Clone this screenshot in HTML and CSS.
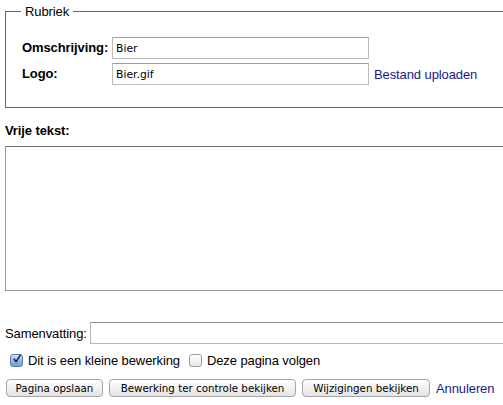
FILE: index.html
```html
<!DOCTYPE html>
<html lang="nl">
<head>
<meta charset="utf-8">
<title>Rubriek bewerken</title>
<link rel="stylesheet" href="styles.css">
</head>
<body>
<form class="page">
  <div class="box">
    <div class="box-title">Rubriek</div>
    <div class="fields">
      <label class="field-label" for="oms">Omschrijving:</label>
      <input class="text-input" id="oms" type="text" value="Bier">
      <span></span>
      <label class="field-label" for="logo">Logo:</label>
      <input class="text-input" id="logo" type="text" value="Bier.gif">
      <a class="link" href="#">Bestand uploaden</a>
    </div>
  </div>

  <div class="section-label">Vrije tekst:</div>
  <textarea class="editor"></textarea>

  <div class="summary-row">
    <label class="summary-label" for="sum">Samenvatting:</label>
    <input class="summary-input" id="sum" type="text">
  </div>

  <div class="check-row">
    <span class="check checked"><svg viewBox="0 0 12 12" width="12" height="12"><path d="M2.6 6.2 L5 9.2 L9.8 1.6" fill="none" stroke="#1b2740" stroke-width="1.9" stroke-linecap="round" stroke-linejoin="round"/></svg></span>
    <span class="check-text">Dit is een kleine bewerking</span>
    <span class="check"></span>
    <span class="check-text">Deze pagina volgen</span>
  </div>

  <div class="button-row">
    <button class="btn btn-save" type="button">Pagina opslaan</button>
    <button class="btn btn-preview" type="button">Bewerking ter controle bekijken</button>
    <button class="btn btn-diff" type="button">Wijzigingen bekijken</button>
    <a class="link cancel" href="#">Annuleren</a>
  </div>
</form>
</body>
</html>
```

FILE: styles.css
```css
html, body {
  margin: 0;
  padding: 0;
  background: #fff;
  overflow: hidden;
}
body {
  font-family: "Liberation Sans", Arial, Helvetica, sans-serif;
  font-size: 13px;
  letter-spacing: -0.1px;
  color: #000;
  width: 503px;
  height: 405px;
}
.page {
  display: flex;
  flex-direction: column;
  align-items: flex-start;
  padding-left: 5px;
  width: 600px;
}
.box {
  position: relative;
  margin: 11px 0 0 0;
  padding: 25px 15px 22px 15px;
  border: 1px solid #3a70b0;
  width: 560px;
  box-sizing: border-box;
}
/* legend sits over the top border */
.box-title {
  position: absolute;
  top: -8px;
  left: 15px;
  padding: 0 4px;
  line-height: 15px;
  background: #fff;
}
.fields {
  display: grid;
  grid-template-columns: 91px 257px auto;
  row-gap: 4px;
  align-items: center;
}
.field-label {
  font-weight: bold;
  padding-left: 1px;
  line-height: 15px;
  margin-top: -2px;
}
.text-input {
  box-sizing: border-box;
  width: 257px;
  height: 22px;
  margin: 0;
  padding: 1px 3px 0 3px;
  border: 1px solid #bdbdbd;
  border-top-color: #9e9e9e;
  font-family: "DejaVu Sans", "Lucida Grande", sans-serif;
  font-size: 10.8px;
  letter-spacing: 0;
  color: #000;
  background: #fff;
}
.link {
  color: #1a1a8c;
  text-decoration: none;
  margin-left: 5px;
  line-height: 15px;
}
.section-label {
  font-weight: bold;
  line-height: 15px;
  margin-top: 15px;
}
.editor {
  box-sizing: border-box;
  display: block;
  margin: 8px 0 0 0;
  width: 560px;
  height: 145px;
  border: 1px solid #9a9a9a;
  border-top-color: #6e6e6e;
  resize: none;
  padding: 2px;
}
.summary-row {
  display: flex;
  align-items: center;
  margin-top: 31px;
  height: 22px;
}
.summary-label {
  line-height: 15px;
  width: 85px;
}
.summary-input {
  box-sizing: border-box;
  width: 470px;
  height: 22px;
  margin: 0;
  border: 1px solid #b8b8b8;
  border-top-color: #8e8e8e;
  padding: 0 3px;
}
.check-row {
  display: flex;
  align-items: center;
  margin-top: 9px;
  height: 14px;
  padding-left: 5px;
}
.check {
  box-sizing: border-box;
  width: 13px;
  height: 13px;
  border: 1px solid #9b9b9b;
  border-radius: 3px;
  background: linear-gradient(#ffffff, #e8e8e8);
  display: flex;
  align-items: center;
  justify-content: center;
  flex: none;
}
.check.checked {
  border-color: #5d7ba6;
  background: linear-gradient(#d3e4f8, #8fb8ec 55%, #6f9fe0);
}
.check svg {
  display: block;
  margin-top: -2px;
  margin-left: 1px;
}
.check-text {
  margin-left: 5px;
  margin-right: 9px;
  line-height: 15px;
}
.button-row {
  display: flex;
  align-items: center;
  gap: 6px;
  margin-top: 12px;
  padding-left: 1px;
}
.btn {
  box-sizing: border-box;
  height: 18px;
  margin: 0;
  padding: 0 8px;
  border: 1px solid #a6a6a6;
  border-radius: 4px;
  background: linear-gradient(#ffffff, #f1f1f1 50%, #e4e4e4);
  font-family: "DejaVu Sans", "Lucida Grande", sans-serif;
  font-size: 10.3px;
  letter-spacing: 0;
  color: #000;
  line-height: 16px;
}
.btn-save { width: 97px; }
.btn-preview { width: 187px; }
.btn-diff { width: 128px; }
.cancel {
  margin-left: 0;
  color: #1a1a8c;
}
```
